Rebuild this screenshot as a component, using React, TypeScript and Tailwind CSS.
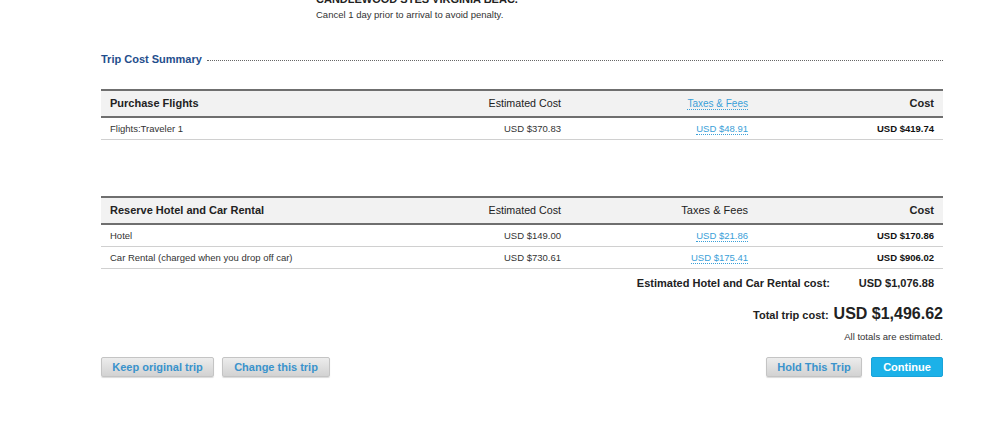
const font = { fontFamily: '"Liberation Sans", Arial, sans-serif' };

type Row = { label: string; est: string; tax: string; cost: string };

const flights: Row[] = [
  { label: "Flights:Traveler 1", est: "USD $370.83", tax: "USD $48.91", cost: "USD $419.74" },
];

const hotelCar: Row[] = [
  { label: "Hotel", est: "USD $149.00", tax: "USD $21.86", cost: "USD $170.86" },
  {
    label: "Car Rental (charged when you drop off car)",
    est: "USD $730.61",
    tax: "USD $175.41",
    cost: "USD $906.02",
  },
];

function TaxLink({ children }: { children: React.ReactNode }) {
  return (
    <span className="text-[#3aa0d8] border-b border-dotted border-[#3aa0d8] leading-[12px]">
      {children}
    </span>
  );
}

function CostTable({
  title,
  rows,
  taxLinked,
}: {
  title: string;
  rows: Row[];
  taxLinked: boolean;
}) {
  return (
    <div className="w-full">
      <div className="grid grid-cols-[299px_170px_187px_186px] h-[29px] items-center bg-[#f2f2f2] border-t-2 border-b-2 border-[#6f6f6f] text-[11px] text-[#222]">
        <div className="pl-[9px] font-bold">{title}</div>
        <div className="text-right pr-[9px] text-[10.7px]">Estimated Cost</div>
        <div className="text-right pr-[9px]">
          {taxLinked ? (
            <span className="text-[10px]">
              <TaxLink>Taxes &amp; Fees</TaxLink>
            </span>
          ) : (
            "Taxes & Fees"
          )}
        </div>
        <div className="text-right pr-[9px] font-bold">Cost</div>
      </div>
      {rows.map((r) => (
        <div
          key={r.label}
          className="grid grid-cols-[299px_170px_187px_186px] h-[22px] items-center border-b border-[#d0d0d0] text-[9.5px] text-[#333] pt-[1px]"
        >
          <div className="pl-[9px]">{r.label}</div>
          <div className="text-right pr-[9px]">{r.est}</div>
          <div className="text-right pr-[9px]">
            <TaxLink>{r.tax}</TaxLink>
          </div>
          <div className="text-right pr-[9px] font-bold text-[#111]">{r.cost}</div>
        </div>
      ))}
    </div>
  );
}

function GrayButton({ label, w }: { label: string; w: string }) {
  return (
    <button
      className={`${w} h-[20px] rounded-[2px] border border-[#c4c4c4] bg-gradient-to-b from-[#ececec] to-[#d2d2d2] text-[11px] font-bold text-[#3a93cc] shadow-[0_1px_1px_rgba(0,0,0,0.15)]`}
    >
      {label}
    </button>
  );
}

export default function App() {
  return (
    <div style={font} className="w-[998px] h-[422px] overflow-hidden bg-white text-[#333]">
      <div className="pl-[316px] -mt-[7px]">
        <div className="text-[11px] font-bold leading-[13px] text-[#222]">
          CANDLEWOOD STES VIRGINIA BEAC.
        </div>
        <div className="text-[9.5px] leading-[13px] mt-[2px]">
          Cancel 1 day prior to arrival to avoid penalty.
        </div>
      </div>

      <div className="ml-[101px] w-[842px]">
        <div className="flex items-center mt-[31px] h-[14px]">
          <span className="text-[11px] font-bold text-[#1f4e8c] whitespace-nowrap">
            Trip Cost Summary
          </span>
          <span className="flex-1 ml-[5px] border-b border-dotted border-[#666] translate-y-[1px]" />
        </div>

        <div className="mt-[23px]">
          <CostTable title="Purchase Flights" rows={flights} taxLinked />
        </div>

        <div className="mt-[56px]">
          <CostTable title="Reserve Hotel and Car Rental" rows={hotelCar} taxLinked={false} />
        </div>

        <div className="flex justify-end items-center h-[28px] text-[11px] font-bold text-[#222]">
          <span>Estimated Hotel and Car Rental cost:</span>
          <span className="w-[113px] text-right pr-[9px]">USD $1,076.88</span>
        </div>

        <div className="flex justify-end items-baseline mt-[5px] text-[#222] font-bold">
          <span className="text-[11px]">Total trip cost:</span>
          <span className="text-[16px] ml-[5px]">USD $1,496.62</span>
        </div>

        <div className="text-right text-[9.5px] mt-[4px]">All totals are estimated.</div>

        <div className="flex items-center justify-between mt-[13px]">
          <div className="flex gap-[8px]">
            <GrayButton label="Keep original trip" w="w-[113px]" />
            <GrayButton label="Change this trip" w="w-[108px]" />
          </div>
          <div className="flex gap-[9px]">
            <GrayButton label="Hold This Trip" w="w-[96px]" />
            <button className="w-[72px] h-[20px] rounded-[2px] border border-[#1aa3d9] bg-[#1cb1e8] text-[11px] font-bold text-white">
              Continue
            </button>
          </div>
        </div>
      </div>
    </div>
  );
}
